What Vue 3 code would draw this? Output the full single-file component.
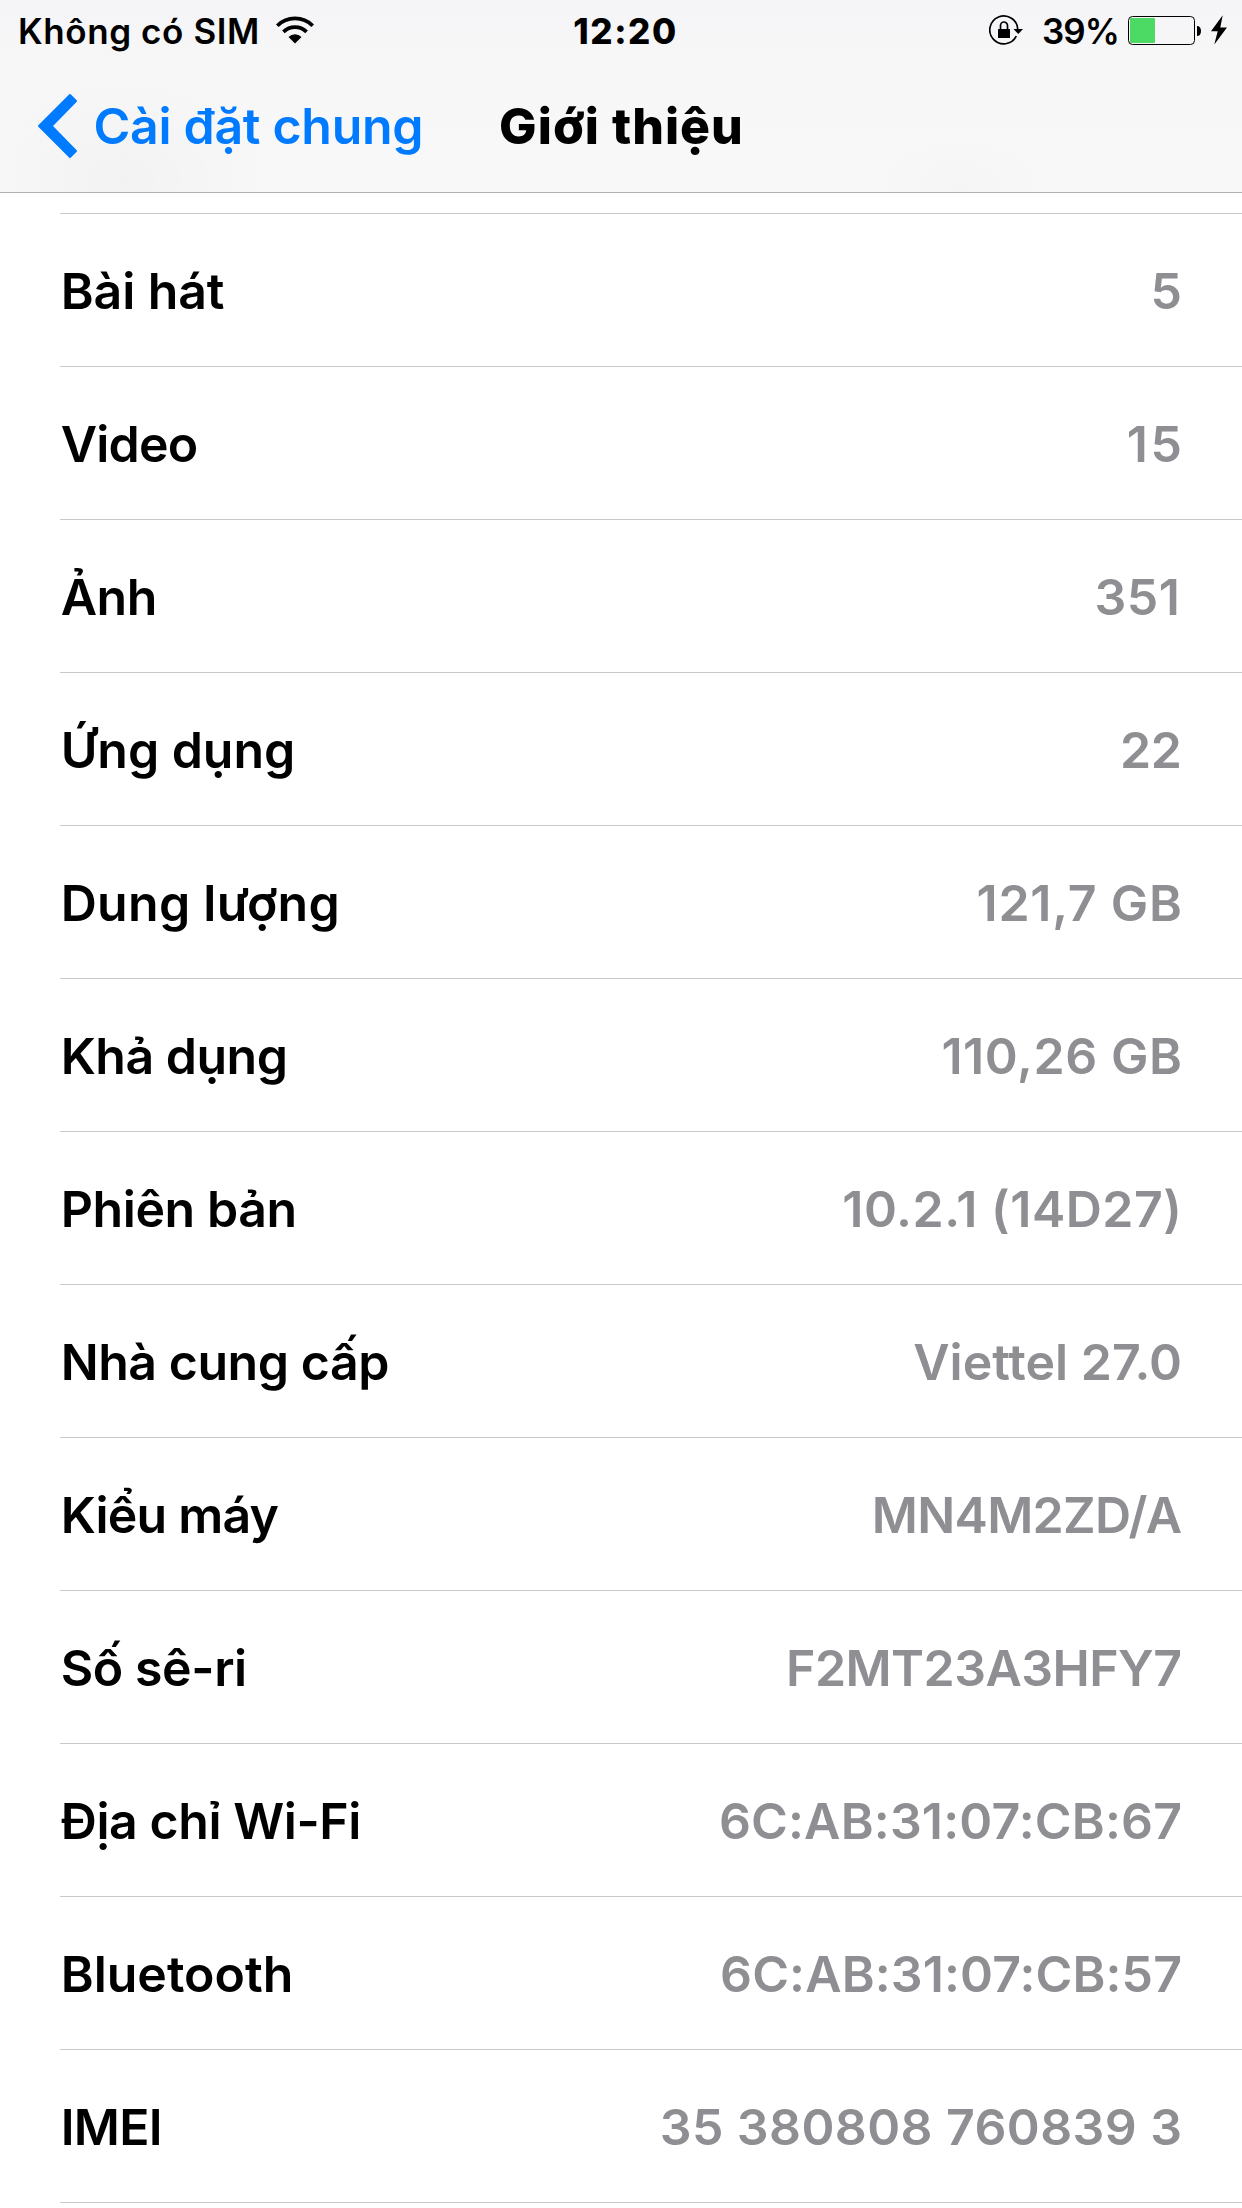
<script setup>
// `lt` / `vt` are the tracking, in px, of a row's label and value
const rows = [
  { label: 'Bài hát', lt: -0.1, value: '5', vt: 0 },
  { label: 'Video', lt: -0.8, value: '15', vt: 2.6 },
  { label: 'Ảnh', lt: -0.5, value: '351', vt: 0.6, inset: 2 },
  { label: 'Ứng dụng', lt: -0.05, value: '22', vt: -0.4 },
  { label: 'Dung lượng', lt: 0.3, value: '121,7 GB', vt: 0.77 },
  { label: 'Khả dụng', lt: -0.5, value: '110,26 GB', vt: 0.58 },
  { label: 'Phiên bản', lt: -0.4, value: '10.2.1 (14D27)', vt: 0.52 },
  { label: 'Nhà cung cấp', lt: -0.45, value: 'Viettel 27.0', vt: 0 },
  { label: 'Kiểu máy', lt: -0.8, value: 'MN4M2ZD/A', vt: -0.65 },
  { label: 'Số sê-ri', lt: -0.4, value: 'F2MT23A3HFY7', vt: -0.55 },
  { label: 'Địa chỉ Wi-Fi', lt: -0.42, value: '6C:AB:31:07:CB:67', vt: 0.16 },
  { label: 'Bluetooth', lt: 0, value: '6C:AB:31:07:CB:57', vt: 0.12 },
  { label: 'IMEI', lt: -0.7, value: '35 380808 760839 3', vt: 0.4 },
]
</script>

<template>
  <div class="screen">
    <header class="header">
      <div class="status">
        <div class="status-left">
          <span class="carrier">Không có SIM</span>
          <svg class="wifi" width="38" height="28" viewBox="0 0 38 28">
            <path d="M1.3 9.7A25.1 25.1 0 0 1 36.7 9.7M7.4 15.9A16.4 16.4 0 0 1 30.6 15.9" fill="none" stroke="#000" stroke-width="3.7" />
            <path d="M19 27.4L12.5 20.9A9.2 9.2 0 0 1 25.5 20.9Z" />
          </svg>
        </div>
        <span class="clock">12:20</span>
        <div class="status-right">
          <svg class="lock" width="35" height="32" viewBox="0 0 35 32">
            <path d="M28.8 15.5A14 14 0 1 0 27.3 22.2" fill="none" stroke="#000" stroke-width="1.7" />
            <path d="M24.5 15H34L29.3 20Z" />
            <rect x="9" y="15" width="12" height="9" rx="0.5" />
            <path d="M11.5 16V11.5a3.5 3.5 0 0 1 7 0V16" fill="none" stroke="#000" stroke-width="1.7" />
          </svg>
          <span class="percent">39%</span>
          <svg class="battery" width="73" height="29" viewBox="0 0 73 29">
            <rect x="0.5" y="0.5" width="66" height="28" rx="4" fill="none" stroke="#000" />
            <rect x="2" y="2" width="25" height="25" rx="1" fill="#4cd964" />
            <path d="M69 10c2.6 0 4 2 4 5s-1.4 5-4 5z" />
          </svg>
          <svg class="bolt" width="16" height="30" viewBox="0 0 16 30">
            <path d="M11.7 0.3L0 16.3H6.7L3.3 29.4L16 12.6H9.3Z" />
          </svg>
        </div>
      </div>
      <nav class="nav">
        <a class="back">
          <svg class="chevron" width="41" height="66" viewBox="0 0 41 66">
            <path d="M33 2L39 8L14.6 33L39 58L33 64L2 33Z" fill="#007aff" stroke="#007aff" stroke-width="2" stroke-linejoin="round" />
          </svg>
          <span class="back-label">Cài đặt chung</span>
        </a>
        <h1 class="title">Giới thiệu</h1>
      </nav>
    </header>
    <ul class="list">
      <li v-for="row in rows" :key="row.label" class="row">
        <span class="label" :style="{ letterSpacing: row.lt + 'px' }">{{ row.label }}</span>
        <span class="value" :style="{ letterSpacing: row.vt + 'px', marginRight: (row.inset || 0) - row.vt + 'px' }">{{ row.value }}</span>
      </li>
    </ul>
  </div>
</template>

<style>
body {
  background: #fff;
}
</style>

<style scoped>
.screen {
  width: 1242px;
  height: 2208px;
  overflow: hidden;
  background: #fff;
  color: #000;
  font-family: Inter, "Liberation Sans", sans-serif;
  white-space: nowrap;
}
svg {
  display: block;
  flex: none;
}
.header {
  box-sizing: border-box;
  height: 193px;
  border-bottom: 1px solid #b2b2b2;
  background:
    radial-gradient(ellipse 150px 110px at 122px 182px, rgba(0, 0, 0, 0.022), transparent),
    radial-gradient(ellipse 90px 50px at 960px 186px, rgba(0, 0, 0, 0.01), transparent),
    linear-gradient(#f5f5f8, #f7f7f7 35%, #f8f8f8);
}
.status {
  display: grid;
  grid-template-columns: 1fr auto 1fr;
  height: 62px;
  line-height: 62px;
  font-size: 35px;
}
.status-left,
.status-right {
  display: flex;
  align-items: flex-start;
}
.status-left {
  padding-left: 18px;
}
.carrier {
  width: 240px;
  font-weight: 600;
  letter-spacing: 0.6px;
}
.wifi {
  margin: 15.5px 0 0 17.6px;
}
.clock {
  margin-left: 9px;
  font-weight: 800;
  letter-spacing: 1.6px;
}
.status-right {
  justify-content: flex-end;
  padding-right: 15px;
}
.lock {
  margin: 14px 18px 0 0;
}
.percent {
  margin-right: 9px;
  font-weight: 600;
  letter-spacing: -0.9px;
}
.battery {
  margin: 16px 10px 0 0;
}
.bolt {
  margin-top: 15px;
}
.nav {
  display: grid;
  grid-template-columns: 1fr auto 1fr;
  align-items: center;
  height: 128px;
  font-size: 50px;
}
.back {
  display: flex;
  align-items: center;
  padding-left: 37px;
  color: #007aff;
  font-weight: 600;
}
.back-label {
  margin-left: 15.5px;
  letter-spacing: -0.3px;
}
.title {
  margin: 0 0 0 1px;
  font-size: 50px;
  font-weight: 800;
  letter-spacing: 1px;
}
.list {
  margin: 20px 0 0 60px;
  padding: 0;
  list-style: none;
  border-top: 1px solid #c8c7cc;
}
.row {
  box-sizing: border-box;
  display: flex;
  justify-content: space-between;
  height: 153px;
  padding: 1px 60px 0 0.7px;
  border-bottom: 1px solid #c8c7cc;
  font-size: 50px;
  font-weight: 600;
  line-height: 152px;
}
.value {
  color: #8e8e93;
}
</style>
